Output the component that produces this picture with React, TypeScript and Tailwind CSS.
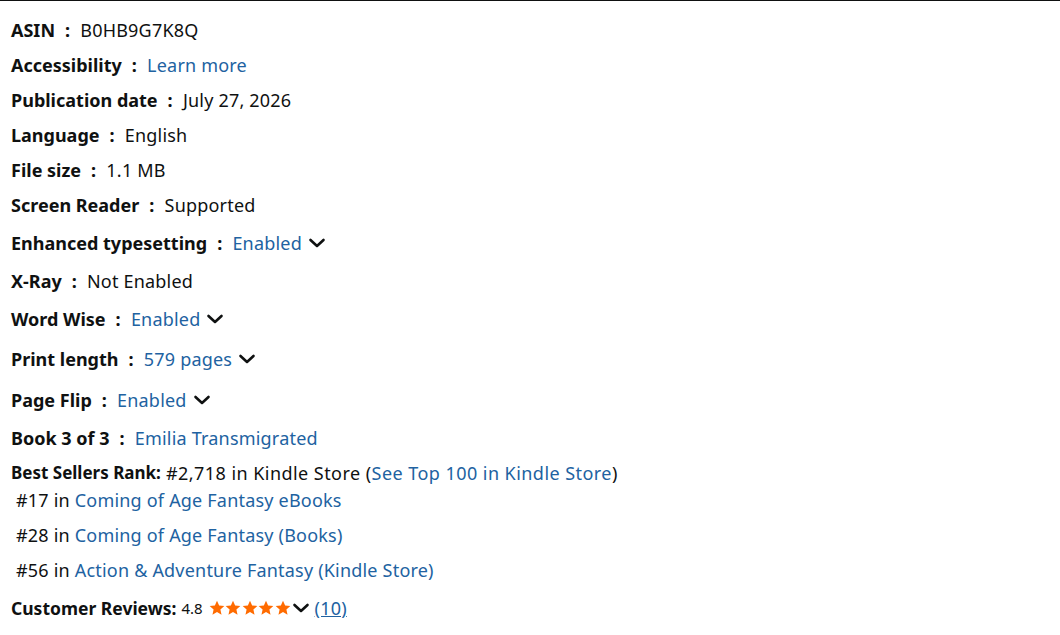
import React from "react";

const Chevron = ({ ml = "ml-[6px]" }: { ml?: string }) => (
  <svg width="18" height="12" viewBox="0 0 18 12" className={`inline-block ${ml}`} aria-hidden>
    <path d="M2.5 3 L9 9 L15.5 3" fill="none" stroke="#0f1111" strokeWidth="2.6" strokeLinecap="round" strokeLinejoin="round" />
  </svg>
);

const Star = () => (
  <svg width="16" height="16" viewBox="0 0 24 24" className="shrink-0" aria-hidden>
    <path d="M12 1 L15.2 8.1 L23 8.9 L17.1 14.2 L18.8 22 L12 18 L5.2 22 L6.9 14.2 L1 8.9 L8.8 8.1 Z" fill="#ff6b00" />
  </svg>
);

const Row = ({ label, children, h }: { label: string; children: React.ReactNode; h: string }) => (
  <li className={`${h}`}>
    <div className="flex items-center h-[24px]">
      <span className="font-bold text-[18px] tracking-normal">{label}</span>
      <span className="font-bold text-[18px] mx-[10px]">:</span>
      <span className="flex items-center">{children}</span>
    </div>
  </li>
);

const L = ({ children }: { children: React.ReactNode }) => <a className="text-[#2162a1]">{children}</a>;

export default function App() {
  return (
    <div
      className="w-[1060px] h-[635px] bg-white border-t border-[#0f1111] text-[#0f1111] text-[18px] tracking-[0.2px] overflow-hidden"
      style={{ fontFamily: '"Noto Sans", sans-serif' }}
    >
      <ul className="pl-[11px] pt-[17px]">
        <Row label="ASIN" h="h-[35px]">B0HB9G7K8Q</Row>
        <Row label="Accessibility" h="h-[35px]"><L>Learn more</L></Row>
        <Row label="Publication date" h="h-[35px]">July 27, 2026</Row>
        <Row label="Language" h="h-[35px]">English</Row>
        <Row label="File size" h="h-[35px]">1.1 MB</Row>
        <Row label="Screen Reader" h="h-[38px]">Supported</Row>
        <Row label="Enhanced typesetting" h="h-[38px]"><L>Enabled</L><Chevron /></Row>
        <Row label="X-Ray" h="h-[38px]">Not Enabled</Row>
        <Row label="Word Wise" h="h-[40px]"><L>Enabled</L><Chevron /></Row>
        <Row label="Print length" h="h-[41px]"><L>579 pages</L><Chevron /></Row>
        <Row label="Page Flip" h="h-[38px]"><L>Enabled</L><Chevron /></Row>
        <Row label="Book 3 of 3" h="h-[35px]"><L>Emilia Transmigrated</L></Row>
        <li className="h-[27px]">
          <div className="flex items-center h-[24px] tracking-[0.45px]">
            <span className="font-bold text-[17px] tracking-normal">Best Sellers Rank:</span>
            <span>&nbsp;#2,718 in Kindle Store (</span>
            <L>See Top 100 in Kindle Store</L>
            <span>)</span>
          </div>
        </li>
        <li className="h-[35px] pl-[5px]">
          <div className="flex items-center h-[24px]">#17 in&nbsp;<L>Coming of Age Fantasy eBooks</L></div>
        </li>
        <li className="h-[35px] pl-[5px]">
          <div className="flex items-center h-[24px]">#28 in&nbsp;<L>Coming of Age Fantasy (Books)</L></div>
        </li>
        <li className="h-[38px] pl-[5px]">
          <div className="flex items-center h-[24px]">#56 in&nbsp;<L>Action &amp; Adventure Fantasy (Kindle Store)</L></div>
        </li>
        <li className="h-[35px]">
          <div className="flex items-center h-[24px]">
            <span className="font-bold text-[17.5px] tracking-normal">Customer Reviews:</span>
            <span className="text-[15px] ml-[5px] mr-[6px] tracking-normal">4.8</span>
            <span className="flex gap-[0.5px]"><Star /><Star /><Star /><Star /><Star /></span>
            <Chevron ml="ml-[1px]" />
            <a className="text-[#2162a1] underline ml-[5px]">(10)</a>
          </div>
        </li>
      </ul>
    </div>
  );
}
